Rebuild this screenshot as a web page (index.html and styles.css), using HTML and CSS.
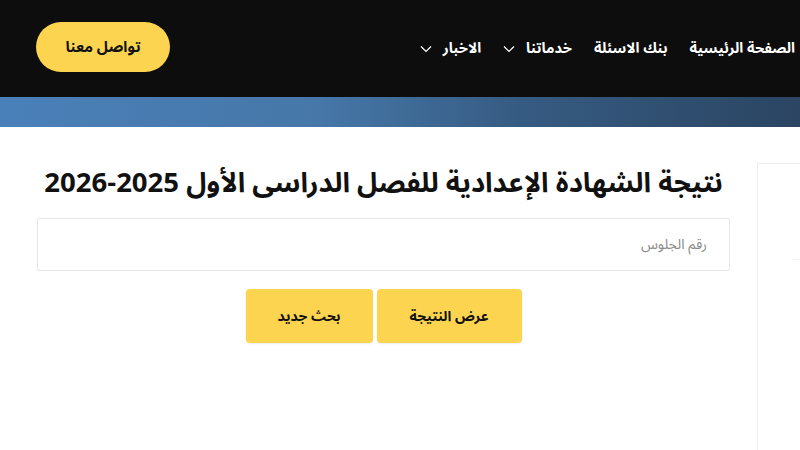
FILE: index.html
```html
<!DOCTYPE html>
<html lang="ar" dir="rtl">
<head>
    <meta charset="UTF-8">
    <meta name="viewport" content="width=device-width, initial-scale=1.0">
    <title>نتيجة الشهادة الإعدادية</title>
    <link rel="stylesheet" href="styles.css">
</head>
<body>
    <header class="header">
        <nav class="nav">
            <a href="#" class="nav-link">الصفحة الرئيسية</a>
            <a href="#" class="nav-link">بنك الاسئلة</a>
            <a href="#" class="nav-link">خدماتنا
                <svg class="chevron" viewBox="0 0 12 8" width="12" height="8"><path d="M1 1.5l5 5 5-5" fill="none" stroke="#fff" stroke-width="1.2"/></svg>
            </a>
            <a href="#" class="nav-link">الاخبار
                <svg class="chevron" viewBox="0 0 12 8" width="12" height="8"><path d="M1 1.5l5 5 5-5" fill="none" stroke="#fff" stroke-width="1.2"/></svg>
            </a>
        </nav>
        <a href="#" class="btn-contact">تواصل معنا</a>
    </header>

    <div class="banner"></div>

    <div class="layout">
        <main class="content">
            <h1 class="title">نتيجة الشهادة الإعدادية للفصل الدراسى الأول 2025-2026</h1>
            <input type="text" class="field" placeholder="رقم الجلوس">
            <div class="actions">
                <button class="btn">عرض النتيجة</button>
                <button class="btn btn-small">بحث جديد</button>
            </div>
        </main>
        <aside class="sidebar">
            <div class="widget"></div>
        </aside>
    </div>
</body>
</html>
```

FILE: styles.css
```css
body {
    font-family: "Noto Sans Arabic", "Noto Kufi Arabic", "DejaVu Sans", sans-serif;
    background-color: #fff;
    margin: 0;
    overflow: hidden;
}

.header {
    height: 97px;
    background-color: #0d0d0d;
    display: flex;
    align-items: center;
    justify-content: space-between;
    padding: 0 5px 0 36px;
    box-sizing: border-box;
}

.nav {
    display: flex;
    align-items: center;
    gap: 22px;
}

.nav-link {
    color: #fff;
    text-decoration: none;
    font-size: 14.5px;
    font-weight: bold;
    display: flex;
    align-items: center;
    gap: 11px;
}

.btn-contact {
    width: 134px;
    height: 50px;
    border-radius: 25px;
    background-color: #fdd44f;
    color: #111;
    text-decoration: none;
    font-size: 15px;
    font-weight: bold;
    display: flex;
    align-items: center;
    justify-content: center;
    margin-top: -3px;
}

.banner {
    height: 30px;
    background: linear-gradient(to right, #4a80b9, #4677a8 40%, #365b82 65%, #2b4562);
}

.layout {
    direction: ltr;
    display: flex;
    gap: 27px;
    padding-left: 37px;
}

.content {
    direction: rtl;
    width: 693px;
    flex-shrink: 0;
    padding-top: 36px;
}

.title {
    margin: 0 0 15px;
    font-size: 27.5px;
    line-height: 40px;
    color: #111;
    text-align: center;
}

.field {
    display: block;
    width: 100%;
    height: 53px;
    box-sizing: border-box;
    border: 1px solid #e6e6e6;
    border-radius: 2px;
    padding: 0 22px;
    font-family: inherit;
    font-size: 14px;
    outline: none;
}

.field::placeholder {
    color: #8a8a8a;
}

.actions {
    display: flex;
    justify-content: center;
    gap: 4px;
    margin-top: 18px;
}

.btn {
    width: 145px;
    height: 54px;
    border: none;
    border-radius: 4px;
    background-color: #fdd44f;
    color: #111;
    font-family: inherit;
    font-size: 14px;
    font-weight: bold;
    box-shadow: 0 1px 2px rgba(0, 0, 0, 0.08);
    cursor: pointer;
}

.btn-small {
    width: 127px;
}

.sidebar {
    width: 260px;
    flex-shrink: 0;
    margin-top: 36px;
    height: 300px;
    border-top: 1px solid #eee;
    border-left: 1px solid #eee;
}

.widget {
    margin-left: 35px;
    height: 95px;
    border-bottom: 1px solid #f2f2f2;
}
```
